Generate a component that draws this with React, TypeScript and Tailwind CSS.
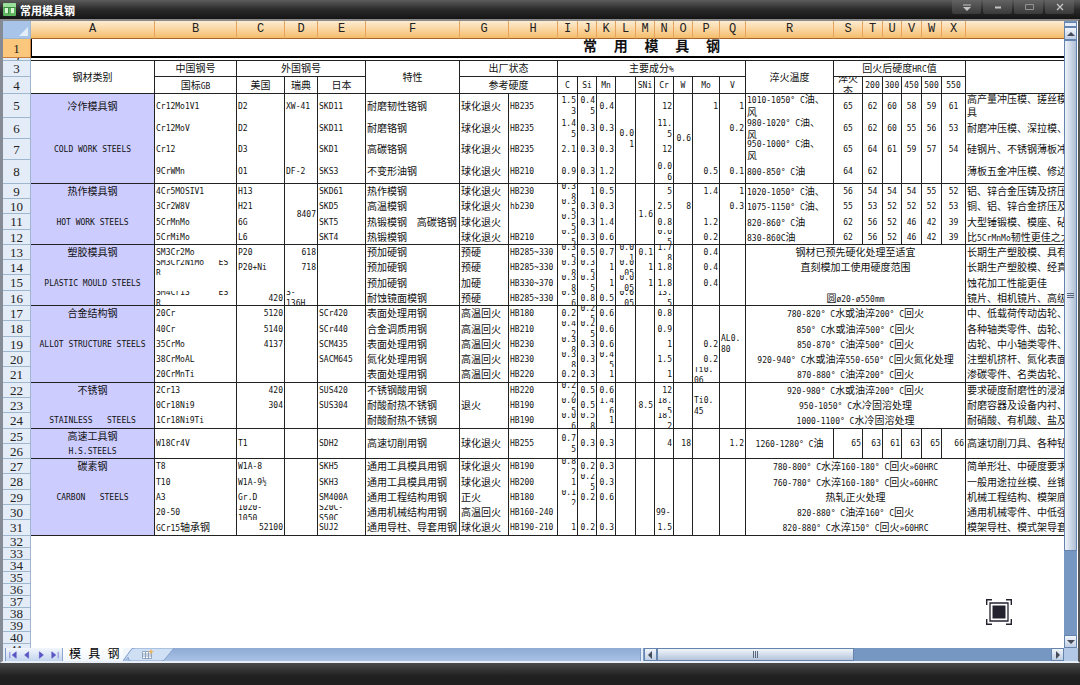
import { Fragment } from "react";
import type { ReactNode } from "react";
import clsx from "clsx";

type Align = "left" | "center" | "right";

type Cell = {
  text: string;
  rowSpan?: number;
  colSpan?: number;
  align?: Align;
};

// null marks a cell that is covered by a merged neighbour
type Entry = string | Cell | null;

const LETTERS = "ABCDEFGHIJKLMNOPQRSTUVWXY".split("");

const COL_WIDTHS = [
  124, 82, 48, 33, 48, 94, 49, 49, 20, 19, 19, 20, 19, 19, 19, 27, 26, 88, 29,
  20, 19, 20, 20, 24, 305,
];

// heights of sheet rows 3 to 31
const ROW_HEIGHTS = [
  16, 17, 24, 21, 21, 24, 15, 15, 16, 15, 15, 15, 16, 15, 15, 16, 15, 15, 16,
  15, 15, 16, 15, 15, 15, 16, 15, 15, 16,
];

const EMPTY_ROWS = [32, 33, 34, 35, 36, 37, 38, 39, 40, 41];

// rows that close a steel group and carry a rule below
const GROUP_ENDS = [4, 8, 12, 16, 21, 24, 26, 31];

const down = (text: string, rowSpan: number, align?: Align): Cell => ({
  text,
  rowSpan,
  align,
});
const across = (text: string, colSpan: number): Cell => ({
  text,
  colSpan,
  align: "center",
});
const mid = (text: string): Cell => ({ text, align: "center" });
const hrc = (...values: string[]): Entry[] => values.map(mid);
const wide = (text: string): Entry[] => [
  across(text, 7),
  null,
  null,
  null,
  null,
  null,
  null,
];

const ROWS: Entry[][] = [
  [
    down("钢材类别", 2, "center"), mid("中国钢号"), across("外国钢号", 3), null, null,
    down("特性", 2, "center"), across("出厂状态", 2), null,
    across("主要成分%", 9), null, null, null, null, null, null, null, null,
    down("淬火温度", 2, "center"), across("回火后硬度HRC值", 6), null, null, null, null, null,
    down("", 2),
  ],
  [
    null, mid("国标GB"), mid("美国"), mid("瑞典"), mid("日本"), null,
    across("参考硬度", 2), null,
    mid("C"), mid("Si"), mid("Mn"), "", mid("SNi"), mid("Cr"), mid("W"), mid("Mo"), mid("V"),
    null, ...hrc("淬火\n态", "200", "300", "450", "500", "550"), null,
  ],
  // cold work
  ["冷作模具钢", "Cr12Mo1V1", "D2", "XW-41", "SKD11", "耐磨韧性铬钢", "球化退火", "HB235", "1.5\n3", "0.4\n5", "0.4", down("0.0\n1", 4), "", "12", down("0.6", 4), "1", "1", "1010-1050° C油、\n风", ...hrc("65", "62", "60", "58", "59", "61"), "高产量冲压模、搓丝模\n具"],
  ["", "Cr12MoV", "D2", "", "SKD11", "耐磨铬钢", "球化退火", "HB235", "1.4\n5", "0.3", "0.3", null, "", "11.\n5", null, "", "0.2", "980-1020° C油、\n风", ...hrc("65", "62", "60", "55", "56", "53"), "耐磨冲压模、深拉模、"],
  ["COLD WORK STEELS", "Cr12", "D3", "", "SKD1", "高碳铬钢", "球化退火", "HB235", "2.1", "0.3", "0.3", null, "", "12", null, "", "", "950-1000° C油、\n风", ...hrc("65", "64", "61", "59", "57", "54"), "硅钢片、不锈钢薄板冲"],
  ["", "9CrWMn", "O1", "DF-2", "SKS3", "不变形油钢", "球化退火", "HB210", "0.9", "0.3", "1.2", null, "", "0.0\n6", null, "0.5", "0.1", "800-850° C油", ...hrc("64", "62", "", "", "", ""), "薄板五金冲压模、修边"],
  // hot work
  ["热作模具钢", "4Cr5MOSIV1", "H13", down("8407", 4), "SKD61", "热作模钢", "球化退火", "HB230", "0.3\n8", "1", "0.5", "", down("1.6", 4), "5", "", "1.4", "1", "1020-1050° C油、", ...hrc("56", "54", "54", "54", "55", "52"), "铝、锌合金压铸及挤压"],
  ["", "3Cr2W8V", "H21", null, "SKD5", "高温模钢", "球化退火", "hb230", "0.3\n5", "0.3", "0.3", "", null, "2.5", "8", "", "0.3", "1075-1150° C油、", ...hrc("55", "53", "52", "52", "52", "53"), "铜、铝、锌合金挤压及"],
  ["HOT WORK STEELS", "5CrMnMo", "6G", null, "SKT5", "热锻模钢  高碳铬钢", "球化退火", "", "0.5\n5", "0.3", "1.4", "", null, "0.8", "", "1.2", "", "820-860° C油", ...hrc("62", "56", "52", "46", "42", "39"), "大型锤锻模、模座、砧"],
  ["", "5CrMiMo", "L6", null, "SKT4", "热锻模钢", "球化退火", "HB210", "0.5\n5", "0.3", "0.6", "", null, "0.6\n5", "", "0.2", "", "830-860C油", ...hrc("62", "56", "52", "46", "42", "39"), "比5CrMnMo韧性更佳之大"],
  // plastic mould
  ["塑胶模具钢", "SM3Cr2Mo", "P20", "618", "", "预加硬钢", "预硬", "HB285~330", "0.3\n5", "0.5", "0.7", "0.0\n1", "0.1", "1.7\n8", "", "0.4", "", ...wide("钢材已预先硬化处理至适宜"), "长期生产塑胶模、具有"],
  ["", "SM3Cr2NiMo   ES\nR", "P20+Ni", "718", "", "预加硬钢", "预硬", "HB285~330", "0.3\n8", "0.3\n5", "1", "0.0\n05", "1", "1.8", "", "0.4", "", ...wide("直刻模加工使用硬度范围"), "长期生产塑胶模、经真"],
  ["PLASTIC MOULD STEELS", "", "", "", "", "预加硬钢", "加硬", "HB330~370", "0.3\n8", "0.3\n5", "1", "0.0\n05", "1", "1.8", "", "0.4", "", ...wide(""), "蚀花加工性能更佳"],
  ["", "SM4Cr13      ES\nR", "420", "S-\n136H", "", "耐蚀镜面模钢", "预硬", "HB285~330", "0.3\n6", "0.8", "0.5", "0.0\n05", "", "13.\n5", "", "", "", ...wide("圆ø20-ø550mm"), "镜片、相机镜片、高级"],
  // alloy structure
  ["合金结构钢", "20Cr", "5120", "", "SCr420", "表面处理用钢", "高温回火", "HB180", "0.2", "0.2\n5", "0.6", "", "", "0.8", "", "", down("AL0.\n80", 5), ...wide("780-820° C水或油淬200° C回火"), "中、低载荷传动齿轮、"],
  ["", "40Cr", "5140", "", "SCr440", "合金调质用钢", "高温回火", "HB210", "0.4\n2", "0.2\n5", "0.6", "", "", "0.9", "", "", null, ...wide("850° C水或油淬500° C回火"), "各种轴类零件、齿轮、"],
  ["ALLOT STRUCTURE STEELS", "35CrMo", "4137", "", "SCM435", "表面处理用钢", "高温回火", "HB230", "0.3\n8", "0.3", "0.6", "", "", "1", "", "0.2", null, ...wide("850-870° C油淬500° C回火"), "齿轮、中小轴类零件、"],
  ["", "38CrMoAL", "", "", "SACM645", "氮化处理用钢", "高温回火", "HB230", "0.3\n8", "0.3", "0.4\n5", "", "", "1.5", "", "0.2", null, ...wide("920-940° C水或油淬550-650° C回火氮化处理"), "注塑机挤杆、氮化表面"],
  ["", "20CrMnTi", "", "", "", "表面处理用钢", "高温回火", "HB220", "0.2", "0.3", "1", "", "", "1", "", "Ti0.\n06", null, ...wide("870-880° C油淬200° C回火"), "渗碳零件、名类齿轮、"],
  // stainless
  ["不锈钢", "2Cr13", "420", "", "SUS420", "不锈钢酸用钢", "", "HB220", "0.2\n2", "0.5", "0.6", "", "", "12", "", down("Ti0.\n45", 3), "", ...wide("920-980° C水或油淬200° C回火"), "要求硬度耐磨性的浸油"],
  ["", "0Cr18Ni9", "304", "", "SUS304", "耐酸耐热不锈钢", "退火", "HB190", "0.0\n5", "0.5", "1.4\n6", "", "8.5", "18.\n5", "", null, "", ...wide("950-1050° C水冷固溶处理"), "耐磨容器及设备内衬、"],
  ["STAINLESS   STEELS", "1Cr18Ni9Ti", "", "", "", "耐酸耐热不锈钢", "", "HB190", "0.0\n6", "0.5\n8", "1", "", "", "18.\n2", "", null, "", ...wide("1000-1100° C水冷固溶处理"), "耐硝酸、有机酸、盐及"],
  // high speed
  [
    "高速工具钢", down("W18Cr4V", 2), down("T1", 2), down("", 2), down("SDH2", 2), down("高速切削用钢", 2), down("球化退火", 2), down("HB255", 2),
    down("0.7\n5", 2), down("0.3", 2), down("0.3", 2), down("", 2), down("", 2), down("4", 2), down("18", 2), down("", 2), down("1.2", 2),
    down("1260-1280° C油", 2, "center"), down("65", 2), down("63", 2), down("61", 2), down("63", 2), down("65", 2), down("66", 2),
    down("高速切削刀具、各种钻", 2),
  ],
  ["H.S.STEELS", ...Array<Entry>(24).fill(null)],
  // carbon
  ["碳素钢", "T8", "W1A-8", "", "SKH5", "通用工具模具用钢", "球化退火", "HB190", "0.8\n2", "0.2", "0.3", "", "", "", "", "", "", ...wide("780-800° C水淬160-180° C回火»60HRC"), "简单形壮、中硬度要求"],
  ["", "T10", "W1A-9½", "", "SKH3", "通用工具模具用钢", "球化退火", "HB200", "1", "0.2\n5", "0.3", "", "", "", "", "", "", ...wide("760-780° C水淬160-180° C回火»60HRC"), "一般用途拉丝模、丝锥"],
  ["CARBON   STEELS", "A3", "Gr.D", "", "SM400A", "通用工程结构用钢", "正火", "HB180", "0.1\n2", "0.2", "0.6", "", "", "", "", "", "", ...wide("热轧正火处理"), "机械工程结构、模架底"],
  ["", "20-50", "1020-\n1050", "", "S20C-\nS50C", "通用机械结构用钢", "高温回火", "HB160-240", "", "", "", "", "", "99-", "", "", "", ...wide("820-880° C油淬160° C回火"), "通用机械零件、中低强"],
  ["", "GCr15轴承钢", "52100", "", "SUJ2", "通用导柱、导套用钢", "球化退火", "HB190-210", "1", "0.2", "0.3", "", "", "1.5", "", "", "", ...wide("820-880° C水淬150° C回火»60HRC"), "模架导柱、模式架导套"],
];

const ALIGN: Record<Align, string> = {
  left: "justify-start text-left",
  center: "justify-center text-center",
  right: "justify-end text-right",
};

// Latin runs are set smaller so that two of them fill one Chinese character
function MixedText({ children }: { children: string }) {
  const runs = children.split(/([\u3000-\u9fff]+)/);
  return (
    <span className="whitespace-pre">
      {runs.map((run, i) =>
        i % 2 === 1 ? (
          <span key={i} className="font-['Noto_Sans_CJK_SC',sans-serif] text-[10px] leading-[11px]">
            {run}
          </span>
        ) : (
          <Fragment key={i}>{run}</Fragment>
        ),
      )}
    </span>
  );
}

function spanHeight(start: number, span: number) {
  return ROW_HEIGHTS.slice(start, start + span).reduce((a, b) => a + b, 0);
}

function SheetCell({ entry, row, col }: { entry: Entry; row: number; col: number }) {
  if (entry === null) return null;
  const cell: Cell = typeof entry === "string" ? { text: entry } : entry;
  const rowSpan = cell.rowSpan ?? 1;
  const sheetRow = row + 3;
  const isNumber = /^[\d.\s]+$/.test(cell.text);
  const align: Align = cell.align ?? (col === 0 ? "center" : isNumber ? "right" : "left");
  const ruled = sheetRow < 5 || GROUP_ENDS.includes(sheetRow + rowSpan - 1);

  return (
    <td
      rowSpan={rowSpan}
      colSpan={cell.colSpan}
      className={clsx(
        "border-r p-0",
        col === 0 && sheetRow >= 5 && "bg-[#ccccff]",
        ruled ? "border-b border-[#222]" : "border-[#222]",
      )}
    >
      <div
        className={clsx("flex items-center overflow-hidden px-px", ALIGN[align])}
        style={{ height: spanHeight(row, rowSpan) - (ruled ? 1 : 0) }}
      >
        <MixedText>{cell.text}</MixedText>
      </div>
    </td>
  );
}

function RowHeader({ n, height, selected }: { n: number; height: number; selected?: boolean }) {
  return (
    <th
      scope="row"
      className={clsx(
        "border-r border-b p-0 font-normal",
        selected
          ? "border-[#c8803c] bg-[#fbc77d]"
          : "border-[#9eb6ce] bg-[#e4ecf7]",
      )}
    >
      <div
        className="flex items-center justify-center overflow-hidden font-['Liberation_Serif',serif] text-[13px] leading-[11px] text-[#222]"
        style={{ height: height - 1 }}
      >
        {n}
      </div>
    </th>
  );
}

function Sheet() {
  return (
    <table className="w-[1268px] table-fixed border-separate border-spacing-0 bg-white font-['DejaVu_Sans_Mono','Noto_Sans_CJK_SC',monospace] text-[8px] leading-[11px] text-[#111]">
      <colgroup>
        <col className="w-[28px]" />
        {COL_WIDTHS.map((width, i) => (
          <col key={LETTERS[i]} style={{ width }} />
        ))}
      </colgroup>
      <thead>
        <tr>
          <th className="border-r border-b border-[#9eb6ce] bg-[#a9c4e9] p-0">
            <div className="flex h-[17px] items-end justify-end p-0.5">
              <svg viewBox="0 0 9 9" className="size-[9px]" aria-hidden="true">
                <path d="M9 0v9H0z" fill="#e4eefb" />
              </svg>
            </div>
          </th>
          {LETTERS.map((letter) => (
            <th
              key={letter}
              scope="col"
              className="border-r border-b border-r-[#e8a35c] border-b-[#a5642a] bg-linear-to-b from-[#fdecd2] to-[#f4bd69] p-0 font-['Liberation_Mono',monospace] text-[12px] leading-[17px] font-normal text-[#222]"
            >
              {letter}
            </th>
          ))}
        </tr>
      </thead>
      <tbody>
        <tr>
          <RowHeader n={1} height={19} selected />
          <td colSpan={25} className="border-b-2 border-l border-black p-0">
            <h1 className="text-center font-['Liberation_Mono','Noto_Sans_CJK_SC',monospace] text-[14px] leading-[17px] font-bold whitespace-pre">
              常  用  模  具  钢
            </h1>
          </td>
        </tr>
        <tr>
          <RowHeader n={2} height={3} />
          <td colSpan={25} className="border-b border-[#222] p-0" />
        </tr>
        {ROWS.map((cells, row) => (
          <tr key={row}>
            <RowHeader n={row + 3} height={ROW_HEIGHTS[row]} />
            {cells.map((entry, col) => (
              <SheetCell key={col} entry={entry} row={row} col={col} />
            ))}
          </tr>
        ))}
        {EMPTY_ROWS.map((n) => (
          <tr key={n}>
            <RowHeader n={n} height={12} />
            <td colSpan={25} className="p-0" />
          </tr>
        ))}
      </tbody>
    </table>
  );
}

function WindowButton({ label, children }: { label: string; children: ReactNode }) {
  return (
    <button
      type="button"
      aria-label={label}
      className="flex h-[14px] w-[29px] items-center justify-center rounded-b-xs bg-linear-to-b from-[#636363] to-[#3a3a3a]"
    >
      <svg viewBox="0 0 12 10" className="h-[10px] w-[12px]" fill="none" stroke="#c4c4c4">
        {children}
      </svg>
    </button>
  );
}

function TitleBar() {
  return (
    <header className="flex h-[19px] shrink-0 items-center justify-between bg-linear-to-b from-[#5c5c5c] via-[#2b2b2b] to-[#151515] pr-[6px] pl-[3px]">
      <div className="flex items-center gap-1">
        <svg viewBox="0 0 13 13" className="size-[13px]" aria-hidden="true">
          <rect width="13" height="13" rx="1" fill="#5fb760" />
          <rect width="13" height="4" rx="1" fill="#9be09a" />
          <path d="M2 5h3v5H2zM8 5h3v5H8z" fill="#d9f5d4" />
          <path d="M5.500 4v7M1 4.500h11" stroke="#3c8b40" />
        </svg>
        <span className="font-['Noto_Sans_CJK_SC',sans-serif] text-[11px] leading-[14px] font-bold text-white">
          常用模具钢
        </span>
      </div>
      <div className="flex gap-[2px] self-start">
        <WindowButton label="菜单">
          <path d="M2 3h8" />
          <path d="M2 5h8L6 9z" fill="#c4c4c4" stroke="none" />
        </WindowButton>
        <WindowButton label="最小化">
          <path d="M3 5.500h6" strokeWidth="2" />
        </WindowButton>
        <WindowButton label="最大化">
          <path d="M2.500 2.500h8v5h-8z" stroke="#929292" />
        </WindowButton>
        <WindowButton label="关闭">
          <path d="M3 2l6 6M9 2L3 8" strokeWidth="1.300" />
        </WindowButton>
      </div>
    </header>
  );
}

function ScrollButton({ label, d }: { label: string; d: string }) {
  return (
    <button
      type="button"
      aria-label={label}
      className="flex size-[13px] shrink-0 items-center justify-center border border-[#6584ad] bg-linear-to-b from-[#f1f5fb] to-[#bfcee3]"
    >
      <svg viewBox="0 0 8 8" className="size-[8px]" fill="#454b5a">
        <path d={d} />
      </svg>
    </button>
  );
}

function VerticalScroll() {
  return (
    <div className="flex w-[14px] shrink-0 flex-col border-r border-white bg-[#7697c1]">
      <div className="mt-px h-[5px] shrink-0 border border-[#6584ad] bg-[#e4ecf7]" />
      <ScrollButton label="向上滚动" d="M0 6l4-4 4 4z" />
      <div className="flex grow-6 items-center justify-center border border-[#6584ad] bg-linear-to-r from-[#eef2f9] to-[#aebfd6]">
        <svg viewBox="0 0 7 7" className="size-[7px]" stroke="#59677e">
          <path d="M0 1.500h7M0 3.500h7M0 5.500h7" />
        </svg>
      </div>
      <div className="grow" />
      <ScrollButton label="向下滚动" d="M0 2l4 4 4-4z" />
    </div>
  );
}

const TAB_NAV = [
  { label: "第一个工作表", d: "M1 1v8M9 1v8L4 5z" },
  { label: "上一个工作表", d: "M7 1v8L2 5z" },
  { label: "下一个工作表", d: "M3 1v8l5-4z" },
  { label: "最后一个工作表", d: "M9 1v8M1 1v8l5-4z" },
];

function SheetBar() {
  return (
    <footer className="flex h-[13px] shrink-0 bg-linear-to-b from-[#8eaad4] to-[#a9c2e4]">
      <div className="flex flex-3 overflow-hidden">
        <div className="w-[3px] border-r border-[#7f9cc6] bg-[#e4ecf7]" />
        <nav className="flex shrink-0 border-r border-[#8ba7d0] bg-linear-to-b from-[#f2f6fc] to-[#c3d5ee]">
          {TAB_NAV.map((item) => (
            <button
              key={item.label}
              type="button"
              aria-label={item.label}
              className="flex w-[14px] items-center justify-center"
            >
              <svg viewBox="0 0 10 10" className="size-[8px]" fill="#5b54c4" stroke="#5b54c4">
                <path d={item.d} strokeWidth="0.800" />
              </svg>
            </button>
          ))}
        </nav>
        <button
          type="button"
          className="shrink-0 bg-linear-to-b from-white to-[#f0f5fc] pr-1 pl-[6px] font-['Liberation_Mono','Noto_Sans_CJK_SC',monospace] text-[12px] leading-[12px] whitespace-pre text-black"
        >
          模 具 钢
        </button>
        <button type="button" aria-label="插入工作表" className="shrink-0">
          <svg viewBox="0 0 52 13" className="h-[13px] w-[52px]">
            <path d="M0 0h9L0 12z" fill="#f0f5fc" />
            <path d="M0 13L8 2q1-2 4-2h39L42 11q-1 2-4 2H8q-3 0-3-4" fill="#cfdff4" stroke="#86a3cd" />
            <path d="M19.500 3.500h9v7h-9zM19.500 6h9M19.500 8h9M22.500 4v7M25.500 4v7" fill="#fff" stroke="#7d94b8" strokeWidth="0.800" />
            <path d="M28 1l1 2 2 .5-2 1-1 2-1-2-2-1 2-.5z" fill="#e8b45c" />
          </svg>
        </button>
      </div>
      <div className="flex flex-2">
        <div className="w-[4px] border-x border-[#7f9cc6] bg-[#e4ecf7]" />
        <ScrollButton label="向左滚动" d="M6 0v8L2 4z" />
        <div className="flex flex-1 bg-[#7697c1]">
          <div className="flex w-1/2 items-center justify-center border border-[#6584ad] bg-linear-to-b from-[#f1f5fb] to-[#b4c4da]">
            <svg viewBox="0 0 7 7" className="size-[7px]" stroke="#59677e">
              <path d="M1.500 0v7M3.500 0v7M5.500 0v7" />
            </svg>
          </div>
        </div>
        <ScrollButton label="向右滚动" d="M2 0v8l4-4z" />
      </div>
      <div className="w-[14px] shrink-0 bg-[#b3c8e6]" />
    </footer>
  );
}

export default function App() {
  return (
    <div className="flex h-screen flex-col overflow-hidden bg-[#2a2a2a]">
      <TitleBar />
      <main className="relative flex min-h-0 flex-1 flex-col border-t-2 border-r-2 border-b-2 border-l-3 border-t-[#8a8a8a] border-r-[#555] border-b-[#e8eef7] border-l-[#858b94]">
        <div className="flex min-h-0 flex-1">
          <div className="min-w-0 flex-1 overflow-hidden bg-white">
            <Sheet />
          </div>
          <VerticalScroll />
        </div>
        <SheetBar />
        <button type="button" aria-label="识别图片" className="absolute right-[66px] bottom-[36px]">
          <svg viewBox="0 0 26 26" className="size-[26px]" fill="none" stroke="#24222f">
            <path d="M.7 6V.7H6M20 .7h5.300V6M25.300 20v5.300H20M6 25.300H.7V20" strokeWidth="1.400" />
            <path d="M4 4h18v18H4z" strokeWidth="1.300" />
            <path d="M6.500 6.500h13v13h-13z" fill="#24222f" stroke="none" />
          </svg>
        </button>
      </main>
      <div className="h-[22px] shrink-0 bg-linear-to-b from-[#4b4b4b] to-[#202020] to-60%" />
    </div>
  );
}
